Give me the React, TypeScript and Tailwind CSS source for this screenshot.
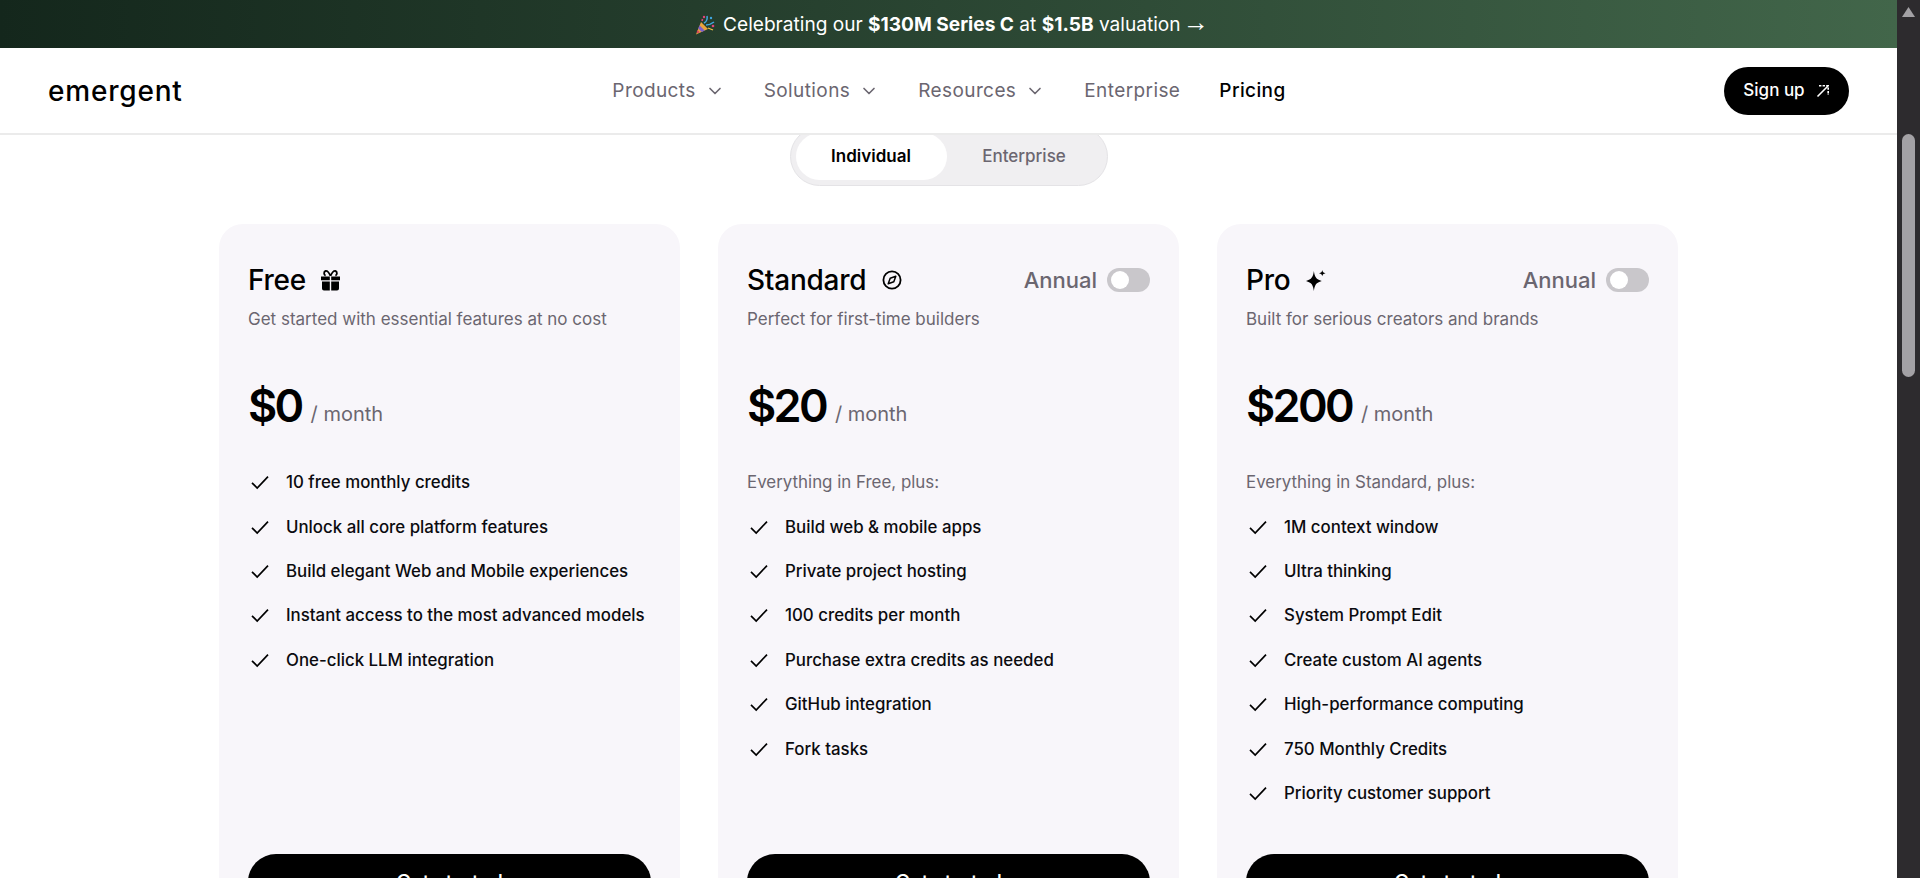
import { ChevronDown } from 'lucide-react'
import type { ReactNode } from 'react'

const NAV = [
  { label: 'Products', menu: true },
  { label: 'Solutions', menu: true },
  { label: 'Resources', menu: true },
  { label: 'Enterprise', menu: false },
]

function Popper() {
  return (
    <svg viewBox="0 0 20 20" className="h-[20px] w-[20px] shrink-0">
      <path d="M6 7 L13 14 L1 19.5 Z" fill="#e8a33d" />
      <path d="M4.6 10.5 L9.6 15.6 L6.8 16.9 L3.2 13.4 Z" fill="#7b5fc9" />
      <path d="M2.6 15 L4.8 17.3 L2.6 18.3 L1.6 17.3 Z" fill="#d9465f" />
      <circle cx="9" cy="2" r="1.2" fill="#e0457b" />
      <circle cx="16" cy="3" r="1.2" fill="#3fa7e0" />
      <circle cx="18" cy="11" r="1.3" fill="#e0457b" />
      <path d="M9 8 Q13 6 12 1" stroke="#3fa7e0" strokeWidth="1.5" fill="none" />
      <path d="M11 10 Q15 10 19 7" stroke="#3fa7e0" strokeWidth="1.5" fill="none" />
      <path d="M7 6 L7.5 4" stroke="#e0457b" strokeWidth="1.5" fill="none" />
      <path d="M13 13 L18 15" stroke="#f0c040" strokeWidth="1.3" fill="none" />
    </svg>
  )
}

function Gift() {
  return (
    <svg viewBox="0 0 21 21" className="-ml-[2px] h-[21px] w-[21px]" fill="#000">
      <path d="M1 6.5h8.8v3.8H1zM11.2 6.5H20v3.8h-8.8zM2 11.6h7.8V20.5H4a2 2 0 0 1-2-2zM11.2 11.6H19v6.9a2 2 0 0 1-2 2h-5.8z" />
      <path d="M10.5 6 C8.5 1.5 6.8 .8 5.6 1 C3.6 1.4 3.6 4.8 5.6 5.6 M10.5 6 C12.5 1.5 14.2 .8 15.4 1 C17.4 1.4 17.4 4.8 15.4 5.6" fill="none" stroke="#000" strokeWidth="1.8" />
    </svg>
  )
}

function CompassIcon() {
  return (
    <svg viewBox="0 0 20 20" className="h-[20px] w-[20px]" fill="none">
      <circle cx="10" cy="10" r="8.6" stroke="#000" strokeWidth="1.8" />
      <path d="M13.8 6.2 L11.8 11.8 L6.2 13.8 L8.2 8.2 Z" stroke="#000" strokeWidth="1.5" strokeLinejoin="round" />
    </svg>
  )
}

function Sparkle() {
  return (
    <svg viewBox="0 0 20 20" className="h-[21px] w-[21px]" fill="#000">
      <path d="M7.5 1 C8.2 6.6 9.6 9 15 10.5 C9.6 12 8.2 14.4 7.5 20 C6.8 14.4 5.4 12 0 10.5 C5.4 9 6.8 6.6 7.5 1 Z" />
      <path d="M15.5 0 C15.8 1.9 16.4 2.5 18.6 3 C16.4 3.5 15.8 4.1 15.5 6 C15.2 4.1 14.6 3.5 12.4 3 C14.6 2.5 15.2 1.9 15.5 0 Z" />
    </svg>
  )
}

function Check() {
  return (
    <svg viewBox="0 0 20 20" className="h-[20px] w-[20px] shrink-0" fill="none" stroke="#000" strokeWidth="1.7">
      <path d="M2 10.8 L7.2 16 L18 4.6" />
    </svg>
  )
}

function Toggle() {
  return (
    <div className="flex items-center gap-[10px]">
      <span className="text-[22px] font-medium leading-[24px] text-[#6b6670]">Annual</span>
      <span className="flex h-[24px] w-[43px] items-center rounded-full bg-[#c9c7cb] pl-[4px]">
        <span className="h-[18px] w-[18px] rounded-full bg-white" />
      </span>
    </div>
  )
}

type Plan = {
  name: string
  icon: ReactNode
  annual?: boolean
  blurb: string
  price: string
  lead?: string
  features: string[]
}

const PLANS: Plan[] = [
  {
    name: 'Free',
    icon: <Gift />,
    blurb: 'Get started with essential features at no cost',
    price: '$0',
    features: [
      '10 free monthly credits',
      'Unlock all core platform features',
      'Build elegant Web and Mobile experiences',
      'Instant access to the most advanced models',
      'One-click LLM integration',
    ],
  },
  {
    name: 'Standard',
    icon: <CompassIcon />,
    annual: true,
    blurb: 'Perfect for first-time builders',
    price: '$20',
    lead: 'Everything in Free, plus:',
    features: [
      'Build web & mobile apps',
      'Private project hosting',
      '100 credits per month',
      'Purchase extra credits as needed',
      'GitHub integration',
      'Fork tasks',
    ],
  },
  {
    name: 'Pro',
    icon: <Sparkle />,
    annual: true,
    blurb: 'Built for serious creators and brands',
    price: '$200',
    lead: 'Everything in Standard, plus:',
    features: [
      '1M context window',
      'Ultra thinking',
      'System Prompt Edit',
      'Create custom AI agents',
      'High-performance computing',
      '750 Monthly Credits',
      'Priority customer support',
    ],
  },
]

function PlanCard({ plan }: { plan: Plan }) {
  return (
    <div className="flex h-[720px] w-[461px] shrink-0 flex-col rounded-[24px] bg-[#f8f6fa] px-[29px] pt-[39px]">
      <div className="flex h-[34px] items-center justify-between">
        <div className="flex items-center gap-[16px]">
          <span className="text-[28px] font-[450] leading-[34px] tracking-[-0.25px] text-black">{plan.name}</span>
          {plan.icon}
        </div>
        {plan.annual && <Toggle />}
      </div>
      <p className="mt-[9px] text-[17px] leading-[26px] text-[#6b6670]">{plan.blurb}</p>
      <div className="mt-[46px] flex h-[56px] items-center gap-[9px]">
        <span className="text-[45px] font-semibold leading-[56px] tracking-[-2.7px] text-black">{plan.price}</span>
        <span className="mt-[15px] text-[20px] leading-[28px] text-[#6b6670]">/ month</span>
      </div>
      <div className="mt-[36.3px] flex h-[384px] flex-col gap-[20.4px]">
        {plan.lead && <p className="text-[16.9px] leading-[24px] text-[#6b6670]">{plan.lead}</p>}
        {plan.features.map((f) => (
          <div key={f} className="flex h-[24px] items-center gap-[16px] pl-[2px]">
            <Check />
            <span className="text-[16.85px] font-medium leading-[24px] text-[#0b0b0f]">{f}</span>
          </div>
        ))}
      </div>
      <button className="h-[56px] w-full shrink-0 rounded-full bg-black text-[20px] font-medium text-white">
        Get started
      </button>
    </div>
  )
}

export default function App() {
  return (
    <div className="flex h-[878px] overflow-hidden bg-white font-['Inter',sans-serif]">
      <div className="flex min-w-0 flex-1 flex-col">
        <div className="flex h-[48px] shrink-0 items-center justify-center gap-[8px] bg-gradient-to-r from-[#14271c] to-[#42664a] pl-[7px] pt-[1px] text-[19.1px] text-white">
          <Popper />
          <span>
            Celebrating our <b className="font-bold">$130M Series C</b> at <b className="font-bold">$1.5B</b> valuation{' '}
            <span className="-ml-[3px] font-['Liberation_Sans',sans-serif] text-[26px] leading-[0]">→</span>
          </span>
        </div>

        <header className="relative z-10 flex h-[87px] shrink-0 items-center justify-between border-b-2 border-[#ebebeb] bg-white pl-[48px] pr-[48px]">
          <span className="w-[134px] text-[28px] font-medium leading-none tracking-[0.8px] text-black">emergent</span>
          <nav className="ml-[-8px] flex items-center gap-[39px] text-[19px] leading-[24px] tracking-[0.4px] text-[#6b6670]">
            {NAV.map((n) => (
              <a key={n.label} className="flex items-center gap-[9px]">
                {n.label}
                {n.menu && <ChevronDown size={20} strokeWidth={2} />}
              </a>
            ))}
            <a className="font-medium text-black">Pricing</a>
          </nav>
          <button className="flex h-[48px] w-[125px] items-center justify-center gap-[11px] rounded-full bg-black pt-[1px] text-[17px] font-medium text-white">
            Sign up
            <svg viewBox="0 0 14 14" className="h-[14px] w-[14px]" fill="none" stroke="#fff" strokeWidth="1.6">
              <path d="M1.5 12.5 L12 2" />
              <path d="M3 1.8 H12.2 V11" strokeDasharray="2.4 1.2" />
            </svg>
          </button>
        </header>

        <main className="min-h-0 flex-1 overflow-hidden">
          <div className="-mt-[8px] flex justify-center">
            <div className="flex h-[59px] w-[318px] items-center rounded-full border border-[#e4e3e6] bg-[#f0eff1] px-[5px] text-[17px]">
              <span className="flex h-[47px] w-[151px] items-center justify-center rounded-full bg-white font-semibold text-black">
                Individual
              </span>
              <span className="flex h-[47px] flex-1 items-center justify-center font-medium text-[#6b6670]">Enterprise</span>
            </div>
          </div>
          <div className="mt-[38px] flex justify-center gap-[38px]">
            {PLANS.map((p) => (
              <PlanCard key={p.name} plan={p} />
            ))}
          </div>
        </main>
      </div>

      <aside className="flex w-[23px] shrink-0 flex-col items-center bg-[#2d2b2e] pt-[7px]">
        <svg viewBox="0 0 13 10" className="h-[10px] w-[13px]" fill="#a3a1a5">
          <path d="M6.5 0 L13 10 H0 Z" />
        </svg>
        <div className="mt-[117px] h-[243px] w-[13px] rounded-full bg-[#a3a1a5]" />
      </aside>
    </div>
  )
}
